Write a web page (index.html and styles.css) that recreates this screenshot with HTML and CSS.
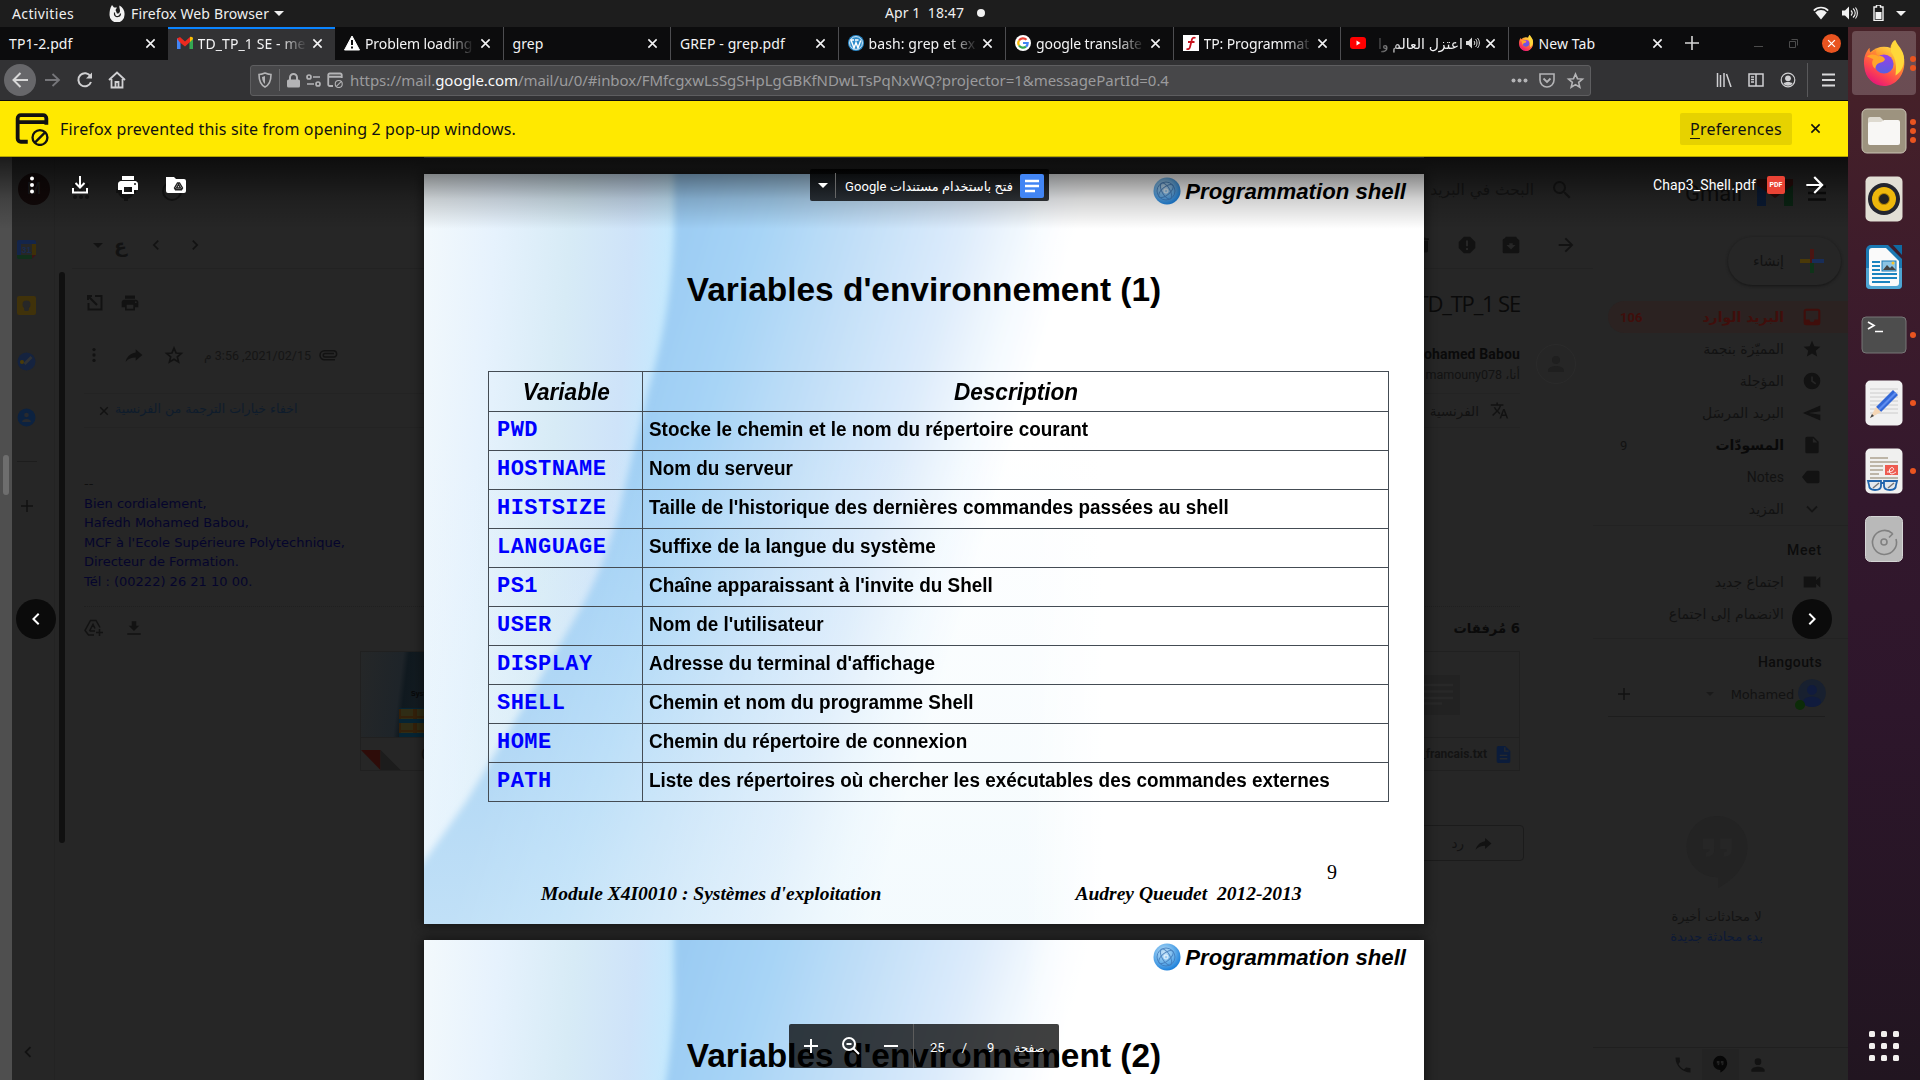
FILE: index.html
```html
<!DOCTYPE html>
<html lang="en">
<head>
<meta charset="utf-8">
<title>TD_TP_1 SE - Gmail</title>
<link rel="stylesheet" href="styles.css">
</head>
<body>
<svg class="defs" width="0" height="0">
  <defs>
    <symbol id="close" viewBox="0 0 12 12"><path d="M1.5 1.5l9 9M10.5 1.5l-9 9" fill="none" stroke="currentColor" stroke-width="1.7"/></symbol>
    <symbol id="more" viewBox="0 0 24 24"><circle cx="12" cy="5.5" r="2"/><circle cx="12" cy="12" r="2"/><circle cx="12" cy="18.500" r="2"/></symbol>
    <symbol id="print" viewBox="0 0 24 24"><path d="M19 8H5c-1.660 0-3 1.340-3 3v6h4v4h12v-4h4v-6c0-1.660-1.340-3-3-3zm-3 11H8v-5h8v5zm3-7a1 1 0 1 1 0-2 1 1 0 0 1 0 2zm-1-9H6v4h12V3z"/></symbol>
    <symbol id="forward" viewBox="0 0 24 24"><path d="M12 4l-1.410 1.410L16.170 11H4v2h12.170l-5.580 5.590L12 20l8-8z"/></symbol>
    <symbol id="search" viewBox="0 0 24 24"><path d="M15.500 14h-.790l-.280-.270A6.470 6.470 0 0 0 16 9.500 6.500 6.500 0 1 0 9.500 16c1.610 0 3.090-.590 4.230-1.570l.270.280v.790l5 4.990L20.490 19l-4.990-5zm-6 0a4.500 4.500 0 1 1 0-9 4.500 4.500 0 0 1 0 9z"/></symbol>
    <symbol id="star" viewBox="0 0 24 24"><path d="M12 17.270L18.180 21l-1.640-7.030L22 9.240l-7.190-.610L12 2 9.190 8.630 2 9.240l5.460 4.730L5.820 21z"/></symbol>
    <symbol id="star-line" viewBox="0 0 24 24"><path d="M12 3.800l2.500 5.900 6.300.5-4.800 4.100 1.500 6.200-5.500-3.300-5.500 3.300 1.500-6.200-4.800-4.100 6.300-.5z" fill="none" stroke="currentColor" stroke-width="2"/></symbol>
    <symbol id="reply" viewBox="0 0 24 24"><path d="M14 9V5l8 7-8 7v-4.100c-5 0-9 1.600-12 5.100 1-5 5-10 12-11z"/></symbol>
    <symbol id="download" viewBox="0 0 24 24"><path d="M19 9h-4V3H9v6H5l7 7 7-7zM3 19v2h18v-2H3z"/></symbol>
    <symbol id="left" viewBox="0 0 24 24"><path d="M15.400 7.400L14 6l-6 6 6 6 1.400-1.400L10.800 12z"/></symbol>
    <symbol id="right" viewBox="0 0 24 24"><path d="M8.600 7.400L10 6l6 6-6 6-1.400-1.400 4.600-4.600z"/></symbol>
    <symbol id="plus" viewBox="0 0 24 24"><path d="M11 4h2v7h7v2h-7v7h-2v-7H4v-2h7z"/></symbol>
    <symbol id="person" viewBox="0 0 24 24"><path d="M12 12a4 4 0 1 0 0-8 4 4 0 0 0 0 8zm0 2c-2.670 0-8 1.340-8 4v2h16v-2c0-2.660-5.330-4-8-4z"/></symbol>
    <symbol id="file" viewBox="0 0 24 24"><path d="M6 2a2 2 0 0 0-2 2v16c0 1.100.9 2 2 2h12a2 2 0 0 0 2-2V8l-6-6H6zm7 7V3.500L18.500 9H13z"/></symbol>
    <symbol id="hangouts" viewBox="0 0 24 24"><path fill-rule="evenodd" d="M11.500 1A8.900 8.900 0 0 0 2.600 10a8.900 8.900 0 0 0 8.900 8.900h.3V22c5-2.500 8.600-7 8.600-12A8.900 8.900 0 0 0 11.500 1zM7.300 7.500h3.400v3.400c0 1.300-.9 2-2.400 2v-1.300c.7 0 1-.4 1-.9h-2zM12.400 7.500h3.400v3.400c0 1.300-.9 2-2.400 2v-1.300c.7 0 1-.4 1-.9h-2z"/></symbol>
    <symbol id="popup-blocked" viewBox="0 0 32 32"><path d="M12 28H5.500A3 3 0 0 1 2.500 25V6a3 3 0 0 1 3-3h21a3 3 0 0 1 3 3v6M3 9.500h26" fill="none" stroke="currentColor" stroke-width="3.600"/><circle cx="23.500" cy="24" r="7" fill="none" stroke="currentColor" stroke-width="2.200"/><path d="M18.700 28.800l9.600-9.600" stroke="currentColor" stroke-width="2.200"/></symbol>
    <symbol id="firefox" viewBox="0 0 48 48">
      <circle cx="24" cy="27" r="20" fill="url(#ff-body)"/>
      <path d="M3.500 28C2 19 5 12 9 8c-.3 3 .6 5 2 6 1.500-2 3-3 5-4-.5 3 0 5 1 6l7 2-5 9c2 6 9 8 14 4 6-5 4-15-2-19-1-4 0-8 4-12 1 5 9 11 10 20 2 16-9 28-21 28C13 48 4 39 3.500 28z" fill="url(#ff-body)"/>
      <circle cx="24" cy="25" r="10" fill="url(#ff-globe)"/>
      <path d="M31 12c0-5 2-9 5-12 1 5 9 10 9 20 0 8-4 14-9 17 1-9 1-17-5-25z" fill="#ffd83a"/>
      <path d="M6 17c5-3 9-2 12 0 4-1 6 1 7 3-1 3-4 3-6 4-3 1-4 4-4 6-4-3-4-8-2-10-2-1-5-2-7-3z" fill="#ffa62b"/>
    </symbol>
    <linearGradient id="ff-body" x1=".8" y1="0" x2=".25" y2="1"><stop offset="0" stop-color="#ffe14a"/><stop offset=".35" stop-color="#ff9a2e"/><stop offset=".7" stop-color="#ff4a4a"/><stop offset="1" stop-color="#e2107e"/></linearGradient>
    <linearGradient id="ff-globe" x1="0" y1="0" x2="0" y2="1"><stop offset="0" stop-color="#9a3ee8"/><stop offset="1" stop-color="#5660e0"/></linearGradient>
    <linearGradient id="sky-left" gradientUnits="userSpaceOnUse" x1="0" y1="0" x2="250" y2="20"><stop offset="0" stop-color="#f3f9fc"/><stop offset=".3" stop-color="#e6f2fd"/><stop offset=".6" stop-color="#d7ebf6"/><stop offset=".85" stop-color="#cee3f9"/><stop offset="1" stop-color="#c6e9fd"/></linearGradient>
    <linearGradient id="sky-right" gradientUnits="userSpaceOnUse" x1="249" y1="0" x2="637" y2="115"><stop offset="0" stop-color="#99caf2"/><stop offset=".25" stop-color="#a7d4f6"/><stop offset=".5" stop-color="#c4e0f8"/><stop offset=".72" stop-color="#dcebfb"/><stop offset=".88" stop-color="#f3f9fe"/><stop offset="1" stop-color="#fff"/></linearGradient>
    <linearGradient id="sky-fade" x1="0" y1="0" x2="0" y2="1"><stop offset=".35" stop-color="#e8f6fc" stop-opacity="0"/><stop offset="1" stop-color="#e8f6fc" stop-opacity=".5"/></linearGradient>
    <filter id="soft" x="-5%" y="-5%" width="110%" height="110%"><feGaussianBlur stdDeviation="3.500"/></filter>
    <symbol id="sky" viewBox="0 0 1000 750">
      <rect width="1000" height="750" fill="url(#sky-left)"/>
      <path d="M250-20V60C247 130 236 175 224 218 214 262 206 290 197 330 188 366 176 400 156 436L100 532 42 628-20 716V790H1020V-20z" fill="url(#sky-right)" filter="url(#soft)"/>
      <rect width="1000" height="750" fill="url(#sky-fade)"/>
      <rect x="600" width="400" height="750" fill="url(#white-in)"/>
    </symbol>
    <linearGradient id="white-in"><stop offset="0" stop-color="#fff" stop-opacity="0"/><stop offset=".2" stop-color="#fff"/></linearGradient>
    <radialGradient id="orb" cx=".4" cy=".35" r=".7"><stop offset="0" stop-color="#c9e4f8"/><stop offset=".5" stop-color="#6db4ec"/><stop offset="1" stop-color="#1279d8"/></radialGradient>
    <symbol id="emblem" viewBox="0 0 28 28"><circle cx="14" cy="14" r="13.500" fill="url(#orb)"/><g fill="none" stroke="#3e78b8" stroke-width="1" opacity=".8"><circle cx="13" cy="14" r="9"/><ellipse cx="13" cy="14" rx="9" ry="4" transform="rotate(60 13 14)"/><ellipse cx="13" cy="14" rx="9" ry="4" transform="rotate(-40 13 14)"/><circle cx="13" cy="14" r="2" stroke="#fff"/></g></symbol>
  </defs>
</svg>

<div class="desktop">
  <header class="topbar">
    <span class="activities">Activities</span>
    <svg class="tb-fox" width="16" height="18" viewBox="0 0 16 18"><path d="M3 1l2 2.500h3L6.500 6 8 9.500a2.500 2.500 0 0 0 3-2.500c0-2-1-3-.5-5.500C14 3.500 16 7 15.500 11a7.500 7.500 0 0 1-15 0C.5 7 1 4 3 1z" fill="#f2f2f2"/><path d="M5.500 8.500c-.5 3 1.500 4.500 3.500 4 1.500-.3 2.500-1.500 2.500-3" stroke="#1d1d1d" stroke-width="1.200" fill="none"/></svg>
    <span class="appname">Firefox Web Browser</span><i class="caret"></i>
    <span class="clock">Apr 1&nbsp; 18:47<i></i></span>
    <div class="tray">
      <svg width="16" height="14" viewBox="0 0 16 14"><path d="M.8 4.600a10 10 0 0 1 14.400 0" fill="none" stroke="#f2f2f2" stroke-width="1.600"/><path d="M8 13.500L2.200 6.400a8 8 0 0 1 11.600 0z" fill="#f2f2f2"/></svg>
      <svg width="16" height="14" viewBox="0 0 16 14"><path d="M0 4.500h3l4-4v13l-4-4H0z" fill="#f2f2f2"/><path d="M9 4.500c1.500 1.500 1.500 3.500 0 5M11 2.500c3 2.500 3 6.500 0 9M13.500 1.500c2.500 3 2.500 8 0 11" fill="none" stroke="#f2f2f2" stroke-width="1.100"/></svg>
      <svg width="11" height="16" viewBox="0 0 11 16"><path d="M3.500 0h4v2H10v13.500H1V2h2.500z" fill="none" stroke="#f2f2f2" stroke-width="1.400"/><rect x="2.500" y="7" width="6" height="7" fill="#f2f2f2"/></svg>
      <i class="caret"></i>
    </div>
  </header>

  <div class="workspace">
    <div class="browser">
      <nav class="tabs">
        <div class="tab"><span>TP1-2.pdf</span><svg class="x"><use href="#close"/></svg></div>
        <div class="tab active"><svg class="fav" viewBox="0 0 16 16"><path d="M0 3v11h3.500V6z" fill="#4285f4"/><path d="M12.500 6v8H16V3z" fill="#34a853"/><path d="M0 3.500L3 2l5 4.500L13 2v5L8 11.500 3 7.500z" fill="#ea2a1f"/><path d="M13 2c2-.5 3 .5 3 2l-3 3z" fill="#fbbc04"/></svg><span class="fade">TD_TP_1 SE - me</span><svg class="x"><use href="#close"/></svg></div>
        <div class="tab"><svg class="fav" viewBox="0 0 16 16"><path d="M8 1l7.500 14H.5z" fill="#fff" stroke="#fff" stroke-linejoin="round"/><path d="M8 5v5M8 11.500v2" stroke="#0c0c0d" stroke-width="2"/></svg><span class="fade tight">Problem loading</span><svg class="x"><use href="#close"/></svg></div>
        <div class="tab line"><span>grep</span><svg class="x"><use href="#close"/></svg></div>
        <div class="tab line"><span>GREP - grep.pdf</span><svg class="x"><use href="#close"/></svg></div>
        <div class="tab line"><svg class="fav" viewBox="0 0 16 16"><circle cx="8" cy="8" r="8" fill="#2e8ccb"/><circle cx="8" cy="8" r="6.400" fill="none" stroke="#fff" stroke-width=".8"/><path d="M3 5l3 8 2-5.500L10 13l2.700-7.500M2.500 5H6M7 5h3.500" fill="none" stroke="#fff" stroke-width="1.400"/></svg><span class="fade">bash: grep et ex</span><svg class="x"><use href="#close"/></svg></div>
        <div class="tab line"><svg class="fav" viewBox="0 0 16 16"><circle cx="8" cy="8" r="8" fill="#fff"/><g fill="none" stroke-width="2.200"><path d="M11.500 4.800A4.800 4.800 0 0 0 4 5.500" stroke="#ea4335"/><path d="M4 5.500a4.800 4.800 0 0 0 0 5" stroke="#fbbc05"/><path d="M4 10.500a4.800 4.800 0 0 0 7 1.200" stroke="#34a853"/><path d="M8 8h4.700a4.800 4.800 0 0 1-1.700 3.700" stroke="#4285f4"/></g></svg><span class="fade tight">google translate</span><svg class="x"><use href="#close"/></svg></div>
        <div class="tab line"><svg class="fav" viewBox="0 0 16 16"><rect width="16" height="16" fill="#fff"/><path d="M12.500 3c-2.500-1-3.500.5-4 3L7 12c-.5 2-1.500 2.500-3.500 1.800M5 7h6.500" fill="none" stroke="#c8141e" stroke-width="1.800"/></svg><span class="fade tight">TP: Programmat</span><svg class="x"><use href="#close"/></svg></div>
        <div class="tab line"><svg class="fav" viewBox="0 0 16 16"><rect y="2" width="16" height="12" rx="3" fill="#f00"/><path d="M6.500 5.500v5l4-2.500z" fill="#fff"/></svg><span class="fade rtl" dir="rtl">اعتزل العالم وا</span><svg class="snd" viewBox="0 0 14 12"><path d="M0 4h2.500L6 .5v11L2.500 8H0z" fill="#ddd"/><path d="M8 4c1 1 1 3 0 4M9.500 2c2 2 2 6 0 8M11.500 1c2.500 3 2.500 7 0 10" fill="none" stroke="#ddd"/></svg><svg class="x"><use href="#close"/></svg></div>
        <div class="tab line"><svg class="fav"><use href="#firefox"/></svg><span>New Tab</span><svg class="x"><use href="#close"/></svg></div>
        <div class="newtab"><svg width="16" height="16" viewBox="0 0 16 16"><path d="M8 1v14M1 8h14" stroke="#d6d6d6" stroke-width="1.600"/></svg></div>
        <div class="winctl"><i class="min"></i><svg width="9" height="9" viewBox="0 0 9 9"><path d="M.5 2.500h6v6h-6zM2.500.5h6v6" fill="none" stroke="#4c4c4c"/></svg><b><svg width="9" height="9"><use href="#close"/></svg></b></div>
      </nav>

      <div class="navbar">
        <div class="navbtns">
          <span class="back"><svg width="18" height="18" viewBox="0 0 18 18"><path d="M9.500 2L2.500 9l7 7M2.500 9H17" fill="none" stroke="#d8d8d8" stroke-width="2"/></svg></span>
          <svg width="18" height="18" viewBox="0 0 18 18"><path d="M8.500 3l6.500 6-6.500 6M15 9H1" fill="none" stroke="#76767a" stroke-width="1.800"/></svg>
          <svg width="18" height="18" viewBox="0 0 18 18"><path d="M14.500 5.500A6.500 6.500 0 1 0 15 11" fill="none" stroke="#d0d0d2" stroke-width="2"/><path d="M16 1.500v6h-6z" fill="#d0d0d2"/></svg>
          <svg width="18" height="18" viewBox="0 0 18 18"><path d="M1 9l8-7.500L17 9M3.500 8v8.500h11V8M7.500 16v-5h3v5" fill="none" stroke="#d0d0d2" stroke-width="1.800"/></svg>
        </div>
        <div class="urlbar">
          <svg width="14" height="16" viewBox="0 0 14 16"><path d="M1 2.500C3 2.500 5 1.800 7 1c2 .8 4 1.500 6 1.500 0 6-1 10-6 12.500C2 12.500 1 8.500 1 2.500z" fill="none" stroke="#b4b4b6" stroke-width="1.600"/><path d="M7 4v8c-2-1.500-2.800-4-3-7z" fill="#b4b4b6"/></svg>
          <i class="usep"></i>
          <svg width="13" height="15" viewBox="0 0 13 15"><rect y="6.500" width="13" height="8" rx="1.500" fill="#b4b4b6"/><path d="M3 7V4.500a3.500 3.500 0 0 1 7 0V7" fill="none" stroke="#b4b4b6" stroke-width="2"/></svg>
          <svg width="15" height="13" viewBox="0 0 15 13"><g fill="none" stroke="#b4b4b6" stroke-width="1.700"><circle cx="3" cy="3" r="2"/><path d="M7 3h7M1 10h7"/><circle cx="12" cy="10" r="2"/></g></svg>
          <svg class="pb" width="16" height="16"><use href="#popup-blocked"/></svg>
          <span class="url">https://mail.<b>google.com</b>/mail/u/0/#inbox/FMfcgxwLsSgSHpLgGBKfNDwLTsPqNxWQ?projector=1&amp;messagePartId=0.4</span>
          <svg width="17" height="5" viewBox="0 0 17 5"><g fill="#b4b4b6"><circle cx="2.500" cy="2.500" r="2"/><circle cx="8.500" cy="2.500" r="2"/><circle cx="14.500" cy="2.500" r="2"/></g></svg>
          <svg width="16" height="15" viewBox="0 0 16 15"><path d="M1 1h14v6a7 7 0 0 1-14 0z" fill="none" stroke="#b4b4b6" stroke-width="1.600"/><path d="M4.500 5.500L8 9l3.500-3.500" fill="none" stroke="#b4b4b6" stroke-width="1.800"/></svg>
          <svg class="bm" width="19" height="19"><use href="#star-line"/></svg>
        </div>
        <div class="navend">
          <svg width="16" height="14" viewBox="0 0 16 14"><path d="M1.500 0v14M4.500 2v12M8 0v14M10.500 1l4.500 13" stroke="#d0d0d2" stroke-width="1.500" fill="none"/></svg>
          <svg width="16" height="14" viewBox="0 0 16 14"><path d="M1 1h14v12H1zM8 1v12M3 4h3M3 6.500h3M3 9h3" fill="none" stroke="#d0d0d2" stroke-width="1.500"/></svg>
          <svg width="16" height="16" viewBox="0 0 16 16"><circle cx="8" cy="8" r="6.800" fill="none" stroke="#d0d0d2" stroke-width="1.200"/><circle cx="8" cy="6.300" r="2.900" fill="#d0d0d2"/><path d="M3.500 11.500c1.500-2 7.500-2 9 0-2 3-7 3-9 0z" fill="#d0d0d2"/></svg>
          <i class="nsep"></i>
          <svg width="13" height="14" viewBox="0 0 13 14"><path d="M0 1.500h13M0 7h13M0 12.500h13" stroke="#d8d8da" stroke-width="2"/></svg>
        </div>
      </div>

      <div class="notice">
        <svg class="pb" width="34" height="34"><use href="#popup-blocked"/></svg>
        <span class="msg">Firefox prevented this site from opening 2 pop-up windows.</span>
        <button><u>P</u>references</button>
        <svg class="x"><use href="#close"/></svg>
      </div>

      <main class="page">
        <div class="gmail">
          <div class="scrolltrack"><i></i></div>
          <aside class="rail">
            <span class="disc">M</span>
            <svg width="19" height="19" viewBox="0 0 19 19"><path d="M0 2a2 2 0 0 1 2-2h15a2 2 0 0 1 2 2v13l-4 4H2a2 2 0 0 1-2-2z" fill="#14254a"/><path d="M15 4h4v11h-4z" fill="#3e3008"/><path d="M0 15h15v4H2a2 2 0 0 1-2-2z" fill="#11301b"/><path d="M15 15h4l-4 4z" fill="#3e1512"/><rect x="4" y="4" width="11" height="11" fill="#272727"/><text x="4.800" y="12.700" font-size="8.500" font-weight="700" fill="#182c50">31</text></svg>
            <svg width="19" height="19" viewBox="0 0 19 19"><rect width="19" height="19" rx="2" fill="#40320a"/><circle cx="9.500" cy="8.500" r="4" fill="#272727"/><path d="M7.500 11.500h4v2h-4zM7.500 14.500h4" stroke="#272727" fill="#272727"/></svg>
            <svg width="19" height="19" viewBox="0 0 19 19"><circle cx="9.500" cy="9.500" r="9" fill="#15233f"/><path d="M7.500 12l7-7" stroke="#303235" stroke-width="3"/><circle cx="5" cy="10" r="2" fill="#4a3b08"/></svg>
            <svg width="19" height="19" viewBox="0 0 19 19"><circle cx="9.500" cy="9.500" r="9" fill="#0c2240"/><circle cx="9.500" cy="7" r="2.300" fill="#282a2e"/><path d="M5 14c0-4 9-4 9 0z" fill="#282a2e"/></svg>
            <hr>
            <svg class="add" width="18" height="18"><use href="#plus"/></svg>
            <svg class="fold" width="22" height="22"><use href="#left"/></svg>
          </aside>
          <section class="mail">
            <i class="mailbar"></i>
            <div class="mrow m-search">
              <div class="lft">
                <svg width="18" height="18" viewBox="0 0 18 18"><g><circle cx="3" cy="3" r="2"/><circle cx="9" cy="3" r="2"/><circle cx="15" cy="3" r="2"/><circle cx="3" cy="9" r="2"/><circle cx="9" cy="9" r="2"/><circle cx="15" cy="9" r="2"/><circle cx="3" cy="15" r="2"/><circle cx="9" cy="15" r="2"/><circle cx="15" cy="15" r="2"/></g></svg>
                <svg width="20" height="20" viewBox="0 0 20 20"><circle cx="10" cy="10" r="6" fill="none" stroke="currentColor" stroke-width="4"/><path d="M10 0v4M10 16v4M0 10h4M16 10h4" stroke="currentColor" stroke-width="4"/></svg>
                <svg width="20" height="20" viewBox="0 0 20 20"><circle cx="10" cy="10" r="9" fill="none" stroke="currentColor" stroke-width="2"/></svg>
              </div>
              <div class="rgt"><span dir="rtl">البحث في البريد</span><svg width="24" height="24"><use href="#search"/></svg></div></div>
            <div class="mrow m-tools"><div class="lft"><i class="caret"></i><b>ع</b><svg width="20" height="20"><use href="#left"/></svg><svg width="20" height="20"><use href="#right"/></svg></div>
              <div class="rgt"><svg width="20" height="20" viewBox="0 0 24 24"><path d="M6 19c0 1.100.9 2 2 2h8a2 2 0 0 0 2-2V7H6zM19 4h-3.500l-1-1h-5l-1 1H5v2h14z"/></svg><svg width="20" height="20" viewBox="0 0 24 24"><path d="M15.700 2H8.300L2 8.300v7.400L8.300 22h7.400l6.300-6.300V8.300z"/><path d="M12 6.500v7M12 15.500v2.500" stroke="#262626" stroke-width="2.500"/></svg><svg width="20" height="20" viewBox="0 0 24 24"><path d="M20.500 5.200l-1.400-1.700C18.900 3.200 18.500 2 18 2H6c-.5 0-.9 1.200-1.200 1.500L2.500 5.200C2.200 5.600 2 6 2 6.500V20c0 1.100.9 2 2 2h16a2 2 0 0 0 2-2V6.500c0-.5-1.200-1-1.500-1.300zM12 17.500L6.500 12H10v-2h4v2h3.500z"/></svg><svg width="22" height="22"><use href="#forward"/></svg></div></div>
            <div class="mrow m-subject"><div class="lft"><svg width="16" height="16" viewBox="0 0 16 16"><path d="M5 1H1v4M1 1l9 9M8 1h6.500v13.500h-13V8" fill="none" stroke="#121212" stroke-width="2"/></svg><svg width="20" height="20"><use href="#print"/></svg></div><div class="rgt"><h1>TD_TP_1 SE</h1></div></div>
            <div class="mrow m-sender"><div class="lft"><svg width="20" height="20"><use href="#more"/></svg><svg width="20" height="20"><use href="#reply"/></svg><svg width="20" height="20"><use href="#star-line"/></svg><time dir="rtl">2021/02/15, 3:56 م</time><svg width="19" height="11" viewBox="0 0 19 11"><path d="M16 9.800H5.500a4.500 4.500 0 0 1 0-9H15a3.200 3.200 0 0 1 0 6.300H6a1.700 1.700 0 0 1 0-3.500h9" fill="none" stroke="#121212" stroke-width="1.500"/></svg></div>
              <div class="rgt"><p><b>Mohamed Babou</b><small dir="rtl">أنا، mamouny078</small></p><span class="avatar"><svg width="24" height="24"><use href="#person"/></svg></span></div></div>
            <div class="mrow m-trans"><div class="lft"><svg class="x"><use href="#close"/></svg><a dir="rtl">اخفاء خيارات الترجمة من الفرنسية</a></div><div class="rgt"><span dir="rtl">الفرنسية</span><svg width="19" height="19" viewBox="0 0 24 24"><path d="M12.900 15.100l-2.600-2.500A17.500 17.500 0 0 0 14.100 6H17V4h-7V2H8v2H1v2h11.200A15 15 0 0 1 9 11.400 15 15 0 0 1 6.700 8h-2a18 18 0 0 0 3 4.600l-5.100 5L4 19l5-5 3.100 3.100zM18.500 10h-2L12 22h2l1.100-3h4.800l1.100 3h2zm-2.600 7l1.600-4.300 1.600 4.300z"/></svg></div></div>
            <div class="m-body"><p class="dash">--</p><p>Bien cordialement,</p><p>Hafedh Mohamed Babou,</p><p>MCF à l'Ecole Supérieure Polytechnique,</p><p>Directeur de Formation.</p><p>Tél : (00222) 26 21 10 00.</p></div>
            <div class="mrow m-atthead"><div class="lft"><svg width="20" height="18" viewBox="0 0 20 18"><path d="M10 16H4.500L1 11.500 6.500 1.500h5.500l4 7M5.500 12h5.500M5.500 12l3.500-6.500 2 4M15.500 10v7M12 13.500h7" fill="none" stroke="#121212" stroke-width="1.500"/></svg><svg width="18" height="18"><use href="#download"/></svg></div><div class="rgt"><b dir="rtl">6 مُرفقات</b></div></div>
            <div class="m-cards">
              <div class="card pdf"><div class="thumb"><b>Système</b><i></i></div><p><span>Chap3</span></p><svg width="40" height="20" viewBox="0 0 40 20"><path d="M0 0h19.500v20z" fill="#2e0c09"/><path d="M19.500 0l20 20h-20z" fill="#1c1c1c"/></svg></div>
              <div class="card txt"><div class="thumb"><svg width="48" height="40" viewBox="0 0 48 40"><rect width="48" height="40" fill="#222"/><path d="M0 10h41M0 16.500h41M0 23h41M0 28.500h30" stroke="#282828" stroke-width="2.600"/></svg></div><p><span>_francais.txt</span><svg width="15" height="17" viewBox="3.500 2 17 20"><path d="M6 2a2 2 0 0 0-2 2v16c0 1.100.9 2 2 2h12a2 2 0 0 0 2-2V8l-6-6z"/><path d="M7.500 13h9M7.500 17h9M13.500 3.500V8H18" stroke="#26292e" stroke-width="1.600" fill="none"/></svg></p></div>
            </div>
            <div class="m-reply"><span dir="rtl">رد</span><svg width="19" height="19"><use href="#reply"/></svg></div>
          </section>
          <aside class="side">
            <div class="brand"><span>Gmail</span><svg width="36" height="28" viewBox="0 0 36 28"><path d="M0 3l9 7v17H0z" fill="#0a1a33"/><path d="M27 10l9-7v24h-9z" fill="#0a2413"/><path d="M0 0h9l9 8 9-8h9v6L18 19 0 6z" fill="#280b0a"/></svg><svg width="20" height="16" viewBox="0 0 20 16"><path d="M0 1.500h18M0 8h18M0 14.500h18" stroke="#0c0c0c" stroke-width="2.500"/></svg></div>
            <div class="compose"><span dir="rtl">إنشاء</span><svg width="24" height="24" viewBox="0 0 24 24"><path d="M10 0h4v14h-4z" fill="#4a1512"/><path d="M10 14h4v10h-4z" fill="#0f3319"/><path d="M0 10h10v4H0z" fill="#4a3908"/><path d="M12 10h12v4H12z" fill="#182d58"/></svg></div>
            <div class="item inbox"><em>106</em><span dir="rtl">البريد الوارد</span><svg viewBox="0 0 24 24"><path d="M19 2H5a3 3 0 0 0-3 3v14a3 3 0 0 0 3 3h14a3 3 0 0 0 3-3V5a3 3 0 0 0-3-3zm.500 13H15a3 3 0 0 1-6 0H4.500V4.500h15z"/></svg></div>
            <div class="item"><span dir="rtl">المميّزة بنجمة</span><svg><use href="#star"/></svg></div>
            <div class="item"><span dir="rtl">المؤجلة</span><svg viewBox="0 0 24 24"><circle cx="12" cy="12" r="10"/><path d="M12 6.500V12l4.500 3.500" fill="none" stroke="#262626" stroke-width="2"/></svg></div>
            <div class="item"><span dir="rtl">البريد المرسَل</span><svg viewBox="0 0 24 24"><path d="M22 21L1 12 22 3v7L8 12l14 2z"/></svg></div>
            <div class="item bold"><em>9</em><span dir="rtl">المسودّات</span><svg><use href="#file"/></svg></div>
            <div class="item"><span>Notes</span><svg viewBox="0 0 24 24"><path d="M5 5.800C5.500 5 6.300 4.500 7 4.500h12a2 2 0 0 1 2 2v11a2 2 0 0 1-2 2H7c-.7 0-1.500-.500-2-1.300L0 12z"/></svg></div>
            <div class="item"><span dir="rtl">المزيد</span><svg viewBox="0 0 24 24"><path d="M6 9l6 6 6-6" fill="none" stroke="#151515" stroke-width="2.200"/></svg></div>
            <h2 class="meet">Meet</h2>
            <div class="item"><span dir="rtl">اجتماع جديد</span><svg viewBox="0 0 24 24"><path d="M17 10V5.500H2v13h15V14l5 4.500v-13z"/></svg></div>
            <div class="item"><span dir="rtl">الانضمام إلى اجتماع</span><svg viewBox="0 0 24 24"></svg></div>
            <h2 class="hang">Hangouts</h2>
            <div class="user"><svg width="18" height="18"><use href="#plus"/></svg><i class="caret"></i><span>Mohamed</span><svg class="me" width="32" height="32" viewBox="0 0 32 32"><defs><clipPath id="me-clip"><circle cx="18" cy="14" r="14"/></clipPath></defs><g clip-path="url(#me-clip)"><circle cx="18" cy="14" r="14" fill="#18202f"/><circle cx="18" cy="11" r="5" fill="#101b3d"/><ellipse cx="18" cy="23" rx="9" ry="5.500" fill="#101b3d"/></g><circle cx="6" cy="26" r="5" fill="#0c2c08"/></svg></div>
            <div class="empty"><svg width="62" height="72" viewBox="2.600 1 17.800 21"><use href="#hangouts" width="24" height="24"/></svg><p dir="rtl">لا محادثات أخيرة</p><a dir="rtl">بدء محادثة جديدة</a></div>
            <div class="chatbar"><svg width="20" height="20" viewBox="0 0 24 24"><path d="M6.600 10.800c1.500 2.800 3.800 5.100 6.600 6.600l2.200-2.200c.3-.3.700-.4 1-.2 1.100.3 2.300.5 4.600.500v5.500c-9.400 0-18-7.600-18-18h5c0 2 .2 3.400.5 4.500.1.400 0 .8-.2 1z"/></svg><b><svg width="19" height="19"><use href="#hangouts"/></svg></b><svg width="20" height="20"><use href="#person"/></svg></div>
          </aside>
        </div>

        <div class="viewer">
          <div class="slides">
            <i class="prev-edge"></i>
            <article class="slide">
              <svg class="bg" width="1000" height="750"><use href="#sky"/></svg>
              <div class="shead"><svg width="28" height="28"><use href="#emblem"/></svg><span>Programmation shell</span></div>
              <h3>Variables d'environnement (1)</h3>
              <div class="table">
                <div class="th"><b><span>Variable</span></b><b><span>Description</span></b></div>
                <div><code>PWD</code><p><span>Stocke le chemin et le nom du répertoire courant</span></p></div>
                <div><code>HOSTNAME</code><p><span>Nom du serveur</span></p></div>
                <div><code>HISTSIZE</code><p><span>Taille de l'historique des dernières commandes passées au shell</span></p></div>
                <div><code>LANGUAGE</code><p><span>Suffixe de la langue du système</span></p></div>
                <div><code>PS1</code><p><span>Chaîne apparaissant à l'invite du Shell</span></p></div>
                <div><code>USER</code><p><span>Nom de l'utilisateur</span></p></div>
                <div><code>DISPLAY</code><p><span>Adresse du terminal d'affichage</span></p></div>
                <div><code>SHELL</code><p><span>Chemin et nom du programme Shell</span></p></div>
                <div><code>HOME</code><p><span>Chemin du répertoire de connexion</span></p></div>
                <div><code>PATH</code><p><span>Liste des répertoires où chercher les exécutables des commandes externes</span></p></div>
              </div>
              <div class="num">9</div>
              <footer><span>Module X4I0010 : Systèmes d'exploitation</span><span>Audrey Queudet&nbsp; 2012-2013</span></footer>
            </article>
            <article class="slide">
              <svg class="bg" width="1000" height="750"><use href="#sky"/></svg>
              <div class="shead"><svg width="28" height="28"><use href="#emblem"/></svg><span>Programmation shell</span></div>
              <h3>Variables d'environnement (2)</h3>
            </article>
          </div>
          <div class="vhead">
            <div class="vleft">
              <svg width="24" height="24"><use href="#more"/></svg>
              <svg width="24" height="24" viewBox="0 0 24 24"><path d="M12 3v11M7.500 10l4.500 4.500 4.500-4.500M5 15v4.500h14V15" fill="none" stroke="#fff" stroke-width="2"/></svg>
              <svg width="24" height="24"><use href="#print"/></svg>
              <svg width="24" height="24" viewBox="0 0 24 24"><path d="M2 4h8l2 2h8a2 2 0 0 1 2 2v10a2 2 0 0 1-2 2H4a2 2 0 0 1-2-2z"/><path d="M13.500 10h2l3 5-1 1.700h-6l-1-1.700zM14.500 11.500l-2 3.500h4z" fill="none" stroke="#222" stroke-width="1.400"/></svg>
            </div>
            <div class="vright"><span>Chap3_Shell.pdf</span><i>PDF</i><svg width="26" height="26"><use href="#forward"/></svg></div>
          </div>
          <div class="openwith"><i class="caret"></i><span dir="rtl">فتح باستخدام مستندات Google</span><svg width="24" height="24" viewBox="0 0 24 24"><rect width="24" height="24" rx="2" fill="#4285f4"/><path d="M5 7h14M5 12h14M5 17h10" stroke="#fff" stroke-width="2.500"/></svg></div>
          <div class="round prev"><svg width="24" height="24"><use href="#left"/></svg></div>
          <div class="round next"><svg width="24" height="24"><use href="#right"/></svg></div>
          <div class="zoombar">
            <svg width="20" height="20" viewBox="0 0 20 20"><path d="M10 3v14M3 10h14" stroke="#fff" stroke-width="2"/></svg>
            <svg width="20" height="20" viewBox="0 0 20 20"><circle cx="8" cy="8" r="6" fill="none" stroke="#fff" stroke-width="2"/><path d="M5.500 8h5M12.500 12.500l5.500 5.500" stroke="#fff" stroke-width="2"/></svg>
            <svg width="20" height="20" viewBox="0 0 20 20"><path d="M3 10h14" stroke="#fff" stroke-width="2"/></svg>
            <i></i><span class="n1">25</span><span class="n2">/</span><span class="n3">9</span><span class="n4" dir="rtl">صفحة</span>
          </div>
        </div>
      </main>
    </div>

    <aside class="dock">
      <div class="app current"><svg width="46" height="50"><use href="#firefox"/></svg><em><i></i><i></i></em></div>
      <div class="app"><svg width="46" height="46" viewBox="0 0 46 46"><rect x="1" y="1" width="44" height="44" rx="5" fill="#9d937f" stroke="#c8c3b4"/><path d="M7 11a2 2 0 0 1 2-2h10l3 3v6H7z" fill="#dedad0"/><path d="M7 16q0-2 2-2h11l3-2h14q2 0 2 2v21q0 2-2 2H9q-2 0-2-2z" fill="#f8f7f5"/></svg><em><i></i><i></i><i></i></em></div>
      <div class="app"><svg width="38" height="46" viewBox="0 0 38 46"><rect x=".5" y=".5" width="37" height="45" rx="5" fill="#e2dfd5"/><circle cx="19" cy="23" r="16" fill="#23252f"/><circle cx="19" cy="23" r="12" fill="#eeb80c"/><circle cx="19" cy="23" r="5.500" fill="#222" stroke="#b98a00"/></svg></div>
      <div class="app"><svg width="38" height="46" viewBox="0 0 38 46"><path d="M1 6a5 5 0 0 1 5-5h17l14 14v26a4 4 0 0 1-4 4H5a4 4 0 0 1-4-4z" fill="#1b79b3"/><path d="M1 24h36v17a4 4 0 0 1-4 4H5a4 4 0 0 1-4-4z" fill="#4ea5d3"/><path d="M28 1h9v10z" fill="#0f6ba3"/><path d="M4 7a3 3 0 0 1 3-3h14l13 13v22a3 3 0 0 1-3 3H7a3 3 0 0 1-3-3z" fill="#fafafa"/><path d="M7 18h8M7 22h8M7 26h8M7 30h25M7 34h25M7 38h18" stroke="#1b84c0" stroke-width="2"/><rect x="17" y="17" width="14" height="10" fill="#8cc4e4" stroke="#1b79b3"/><path d="M18 26l4-5 3 3 2-2 4 4z" fill="#444"/><circle cx="28" cy="19" r="1.500" fill="#f8c52a"/></svg></div>
      <div class="app"><svg width="46" height="38" viewBox="0 0 46 38"><rect x="1" y="1" width="44" height="36" rx="4" fill="#4d4d4d" stroke="#777"/><path d="M7 6l6 3.500L7 13M14 15.500h8" fill="none" stroke="#fff" stroke-width="1.700"/></svg><em><i></i></em></div>
      <div class="app"><svg width="38" height="46" viewBox="0 0 38 46"><rect x=".5" y=".5" width="37" height="45" rx="5" fill="#f1f1f1"/><path d="M5 9h28M5 13h28M5 17h28M5 21h28M5 25h28M5 29h28M5 33h28" stroke="#ccc"/><path d="M11 27l17-17 5 5-17 17z" fill="#3267d6"/><path d="M13 29l17-17 1.500 1.500-17 17z" fill="#5d8cf0"/><path d="M5 38l6-11 5 5z" fill="#f5d6b5"/><path d="M5 38l2-4 2 2z" fill="#444"/></svg><em><i></i></em></div>
      <div class="app"><svg width="38" height="46" viewBox="0 0 38 46"><rect x=".5" y=".5" width="37" height="45" rx="5" fill="#f0f0ef"/><path d="M5 10h18M5 14h28M5 18h13M5 22h13M5 26h9M5 30h28" stroke="#bdb5a7" stroke-width="2"/><rect x="20" y="17" width="13" height="10" fill="#ee5b50"/><path d="M22 24c5 0 8-2 6-4s-5 3-3 5 4 0 6-1" fill="none" stroke="#fff"/><path d="M3 33h13v5q0 4-6 4t-6-5zM19 33h13l-1 4q0 5-6 5t-6-4zM16 35h3" fill="#e3e9ee" stroke="#2065ad" stroke-width="1.800"/><path d="M8 40l6-5M23 40l6-5" stroke="#777" stroke-width="1.500"/></svg><em><i></i></em></div>
      <div class="app"><svg width="38" height="46" viewBox="0 0 38 46"><rect x=".5" y=".5" width="37" height="45" rx="5" fill="#b9b9b9" stroke="#d5d5d5"/><g fill="none" stroke="#808080" stroke-width="1.600"><path d="M27.500 17.500A12 12 0 1 0 31 23"/><path d="M24 21.500l4-4"/><circle cx="19" cy="26" r="3"/></g></svg></div>
      <div class="grid"><i></i><i></i><i></i><i></i><i></i><i></i><i></i><i></i><i></i></div>
    </aside>
  </div>
</div>
</body>
</html>
```
FILE: styles.css
```css
* { box-sizing: border-box; margin: 0; padding: 0; }
body { width: 1920px; height: 1080px; overflow: hidden; font-family: "Noto Sans", "DejaVu Sans", sans-serif; font-size: 14px; background: #1d1d1d; }
svg { display: block; flex: none; fill: currentColor; }
.defs { position: absolute; }
em, i { font-style: normal; }
span, b, p, a, time, h1, h2, h3 { white-space: nowrap; }
.desktop { display: flex; flex-direction: column; height: 1080px; }
.caret { display: block; flex: none; width: 0; height: 0; border: 5px solid transparent; border-top-color: currentColor; border-bottom: 0; }

/* top bar */
.topbar { position: relative; display: flex; align-items: center; height: 27px; padding: 0 20px 1px 12px; color: #f0f0f0; background: #1d1d1d; }
.activities { width: 97px; letter-spacing: .37px; }
.tb-fox { margin-right: 6px; }
.appname { letter-spacing: .14px; margin-right: 5px; }
.clock { position: absolute; left: 885px; top: 3px; display: flex; align-items: center; gap: 13px; white-space: pre; letter-spacing: .08px; }
.clock i { width: 8px; height: 8px; border-radius: 50%; background: #f2f2f2; }
.tray { display: flex; align-items: center; gap: 13px; margin-left: auto; }
.tray svg:nth-child(3) { margin: 0 -1px 0 2px; }
.tray .caret { margin-right: -6px; }

.workspace { display: flex; height: 1053px; }
.browser { display: flex; flex-direction: column; width: 1848px; }

/* tabs */
.tabs { display: flex; height: 33px; background: #0c0c0d; color: #f4f4f5; }
.tab { display: flex; align-items: center; width: 167.5px; padding: 0 12px 1px 9px; letter-spacing: .1px; }
.tab.line { border-left: 1px solid #4d4d50; }
.tab.active { background: #323234; box-shadow: inset 0 2px #0a84ff; }
.tab .fav { width: 16px; height: 16px; margin-right: 5px; }
.tab .fade { width: 109px; overflow: hidden; -webkit-mask-image: linear-gradient(90deg, #000 75%, transparent); mask-image: linear-gradient(90deg, #000 75%, transparent); }
.tab .tight { letter-spacing: -.1px; }
.tab .fade.rtl { width: 92px; -webkit-mask-image: linear-gradient(270deg, #000 65%, transparent); mask-image: linear-gradient(270deg, #000 65%, transparent); }
.tab .snd { width: 14px; height: 12px; margin-left: 3px; }
.x { width: 11px; height: 11px; margin-left: auto; }
.newtab { display: flex; align-items: center; padding: 0 0 1px 9px; width: 79px; }
.winctl { display: flex; align-items: center; padding-bottom: 1px; margin-left: -3px; }
.winctl .min { width: 9px; height: 1px; margin: 6px 26px 0 3px; background: #4c4c4c; }
.winctl b { display: flex; align-items: center; justify-content: center; width: 19px; height: 19px; margin-left: 24px; border-radius: 50%; background: #e95420; color: #fff; }

/* navigation */
.navbar { display: flex; align-items: center; height: 41px; background: #323234; border-bottom: 1px solid #0c0c0d; }
.navbtns { display: flex; align-items: center; gap: 14px; width: 250px; padding-left: 4px; }
.back { display: flex; align-items: center; justify-content: center; width: 32px; height: 32px; margin-right: -6px; border-radius: 50%; background: #67676a; }
.urlbar { display: flex; align-items: center; width: 1341px; height: 31px; padding: 0 5px 0 7px; color: #b4b4b6; background: #474749; border: 1px solid #5e5e60; border-radius: 3px; }
.usep { width: 1px; height: 22px; margin: 0 7px; background: #6a6a6c; }
.urlbar svg + svg { margin-left: 6px; }
.url { flex: 1; margin-left: 7px; font-size: 15px; letter-spacing: -.055px; color: #9b9b9d; }
.url b { font-weight: 400; color: #f9f9fa; }
.urlbar .url + svg + svg, .urlbar .bm { margin-left: 11px; }
.navend { display: flex; align-items: center; flex: 1; padding-left: 125px; gap: 16px; }
.nsep { width: 1px; height: 34px; margin: 0 -2px 0 -5px; background: #59595b; }

/* pop-up notice */
.notice { display: flex; align-items: center; height: 56px; padding: 0 27px 0 15px; color: #111; background: #ffe900; border-bottom: 1px solid #b5a600; font-size: 16px; }
.notice .msg { flex: 1; margin-left: 11px; letter-spacing: .15px; }
.notice button { width: 112px; height: 32px; border: 0; border-radius: 2px; background: #e6d200; color: #111; font: inherit; letter-spacing: .26px; }
.notice u { text-underline-offset: 3px; text-decoration-thickness: 1px; }
.notice .x { margin-left: 18px; }

/* mail page */
.page { position: relative; height: 923px; overflow: hidden; background: #262626; }
.gmail { display: flex; height: 923px; color: #121212; font-family: Roboto, "DejaVu Sans", sans-serif; }
.gmail [dir=rtl] { font-family: "DejaVu Sans", sans-serif; }
.scrolltrack { width: 12px; padding: 298px 3px 0; background: #4f4f4f; }
.scrolltrack i { display: block; height: 40px; border-radius: 3px; background: #6e6e6e; }
.rail { display: flex; flex-direction: column; width: 43px; padding: 16px 0 0 5px; border-right: 1px solid #232323; font-family: "Liberation Sans", sans-serif; }
.rail svg { margin-bottom: 37px; }
.rail .disc { display: flex; flex: none; align-items: center; justify-content: center; width: 32px; height: 32px; margin: 0 0 35px 1px; border-radius: 50%; background: #120909; color: #222; font-size: 17px; }
.rail hr { width: 20px; margin-top: -3px; border: 0; border-top: 1px solid #1d1d1d; }
.rail .add { margin: 35px 0 0 1px; }
.rail .fold { margin: auto 0 17px; }
.mail { position: relative; display: flex; flex-direction: column; width: 1538px; }
.mailbar { position: absolute; left: 4px; top: 115px; width: 6px; height: 571px; border-radius: 3px; background: #101010; }
.mrow, .lft, .rgt { display: flex; align-items: center; }
.mrow { justify-content: space-between; padding: 0 73px 0 29px; }
.m-search { height: 65px; padding: 0 19px 0 17px; font-size: 15.500px; color: #151515; }
.m-search .lft { gap: 26px; padding-top: 2px; }
.m-search .rgt { gap: 16px; }
.m-tools { height: 47px; margin-left: 17px; padding: 0 16px 0 21px; border-bottom: 1px solid #222; }
.m-tools .lft b { margin: 0 19px 0 11px; font-size: 19px; font-weight: 700; font-family: "DejaVu Sans", sans-serif; line-height: 20px; }
.m-tools .lft svg + svg { margin-left: 19px; }
.m-tools .rgt { gap: 24px; }
.m-tools .rgt svg:last-child { margin-left: 10px; }
.m-subject { height: 69px; padding: 0 73px 1px 32px; }
.m-subject .lft { gap: 17px; }
.m-subject h1 { font: 400 22px "Open Sans", sans-serif; letter-spacing: -1.180px; color: #0a0a0a; }
.m-sender { height: 55px; align-items: flex-start; padding: 7px 17px 0 29px; color: #121212; }
.m-sender .lft { gap: 20px; height: 20px; }
.m-sender time { font-size: 12.500px; margin-right: -12px; }
.m-sender .lft time { font-family: Roboto, "DejaVu Sans", sans-serif; color: #151515; }
.m-sender p { display: flex; flex-direction: column; align-items: flex-end; gap: 3px; }
.m-sender p b { font-size: 14px; letter-spacing: .14px; line-height: 19px; color: #0a0a0a; }
.m-sender small { font-size: 12.500px; }
.m-sender small[dir=rtl] { font-family: Roboto, "DejaVu Sans", sans-serif; }
.m-sender .rgt { align-items: flex-start; }
.avatar { display: flex; align-items: center; justify-content: center; width: 40px; height: 40px; margin: -1px 0 0 16px; border: 1px solid #2b2b2b; border-radius: 50%; color: #1f1f1f; }
.m-trans { height: 35px; margin: 0 73px 0 29px; padding: 0; border: solid #232323; border-width: 1px 0; }
.m-trans .lft { margin-top: -5px; }
.m-trans .x { width: 10px; height: 10px; margin: 6px 6px 0 15px; }
.m-trans a { font-size: 12.600px; color: #0e1c2c; }
.m-trans .rgt { padding-right: 11px; gap: 11px; font-size: 13.500px; }
.m-body { height: 178px; padding: 46px 0 0 29px; font: 13px/19.400px "DejaVu Sans", sans-serif; color: #05052c; }
.m-body .dash { color: #101010; line-height: 20px; }
.m-atthead { height: 45px; margin: 0 73px 0 29px; padding: 0 0 2px; border-top: 1px dotted #1f1f1f; }
.m-atthead .lft { gap: 21px; }
.m-atthead b { font-size: 13.200px; color: #0a0a0a; }
.m-cards { display: flex; justify-content: space-between; padding: 0 73px 0 305px; }
.card { position: relative; width: 180px; height: 120px; border: 1px solid #202020; }
.card .thumb { height: 86px; border-bottom: 1px solid #202020; overflow: hidden; }
.card p { display: flex; align-items: center; justify-content: flex-end; height: 32px; padding-right: 8px; gap: 9px; font-size: 12px; font-weight: 700; color: #131313; }
.card p svg { color: #0b1c3b; }
.pdf > svg { position: absolute; left: 0; bottom: 0; }
.pdf .thumb { padding: 38px 0 0 50px; font: 7px "Liberation Sans", sans-serif; color: #080808; background: linear-gradient(97deg, #252728 0, #1e2429 42px, #10191f 48px, #1c2226 110px, #262626); }
.pdf .thumb i { display: block; width: 70px; height: 29px; margin: 11px 0 0 -12px; background: repeating-linear-gradient(0deg, #062433 0 4px, transparent 4px 5px, #33200a 5px 7px, transparent 7px 14px), repeating-linear-gradient(90deg, #33200a 0 2px, #2f2c15 2px 14px, #33200a 14px 16px); }
.pdf p { justify-content: flex-start; padding-left: 60px; font-size: 16px; font-weight: 400; }
.txt .thumb { display: flex; align-items: center; justify-content: center; padding-left: 12px; }
.m-reply { display: flex; align-items: center; justify-content: flex-end; align-self: flex-end; width: 140px; height: 36px; margin: 54px 69px 0 0; padding-right: 30px; gap: 10px; border: 1px solid #1b1b1b; border-radius: 4px; font-size: 13.500px; }

/* right-hand mail menu */
.side { display: flex; flex-direction: column; width: 255px; }
.brand { display: flex; align-items: center; justify-content: flex-end; height: 66px; padding: 6px 20px 0 0; gap: 15px; font-size: 22px; color: #0c0c0c; }
.side .compose { display: flex; align-items: center; justify-content: flex-end; align-self: flex-end; gap: 16px; width: 113px; height: 48px; margin: 14px 7px 16px 0; padding-right: 17px; border-radius: 24px; font-size: 14px; box-shadow: 0 1px 3px #151515; }
.item { display: flex; align-items: center; justify-content: flex-end; flex: none; height: 32px; margin-left: 15px; padding: 0 26px 0 12px; gap: 18px; }
.item svg { width: 20px; height: 20px; }
.item em { margin-right: auto; font-size: 13px; }
.item.inbox { border-radius: 16px 0 0 16px; background: #2b2221; color: #400e0b; font-weight: 700; }
.item.bold span { font-weight: 700; color: #090909; }
.meet, .hang { font: 500 14px Roboto, sans-serif; text-align: right; padding-right: 26px; border-top: 1px solid #222; color: #0c0c0c; }
.meet { height: 41px; line-height: 48px; letter-spacing: .770px; }
.hang { height: 38px; line-height: 47px; margin-top: 8px; letter-spacing: .400px; }
.user { display: flex; align-items: center; height: 41px; margin: 0 23px 0 15px; padding: 0 0 4px 7px; border-bottom: 1px solid #1d1d1d; font: 13px "DejaVu Sans", sans-serif; letter-spacing: -.15px; }
.user .caret { margin: 0 17px 0 74px; border-width: 4px; border-bottom: 0; color: #1a1a1a; }
.user .caret { border-color: #1a1a1a transparent transparent; margin-left: auto; }
.user span { margin-right: 0; }
.user .me { margin: 2px -1px 0 0; }
.empty { display: flex; flex-direction: column; align-items: center; padding: 99px 8px 0 0; color: #232323; font-size: 13px; }
.empty p { margin-top: 19px; line-height: 20px; color: #131313; }
.empty a { line-height: 20px; color: #0c1936; }
.chatbar { display: flex; align-items: center; height: 33px; margin-top: auto; padding: 1px 0 0 80px; border-top: 1px solid #1f1f1f; }
.chatbar b { display: flex; align-items: center; justify-content: center; width: 37px; height: 32px; margin: 0 9px 0 9px; background: #232323; color: #070707; }

/* attachment viewer */
.viewer { position: absolute; inset: 0; color: #fff; }
.slides { position: absolute; left: 424px; top: 0; width: 1000px; }
.prev-edge { display: block; height: 1px; margin-bottom: 16px; background: #777; }
.slide { position: relative; isolation: isolate; display: flow-root; width: 1000px; height: 750px; margin-bottom: 16px; background: #fff; color: #000; box-shadow: 0 0 10px 2px rgba(0,0,0,.45); font-family: "Liberation Sans", sans-serif; }
.slide .bg { position: absolute; left: 0; top: 0; z-index: -1; }
.shead { display: flex; align-items: center; justify-content: flex-end; height: 34px; padding-right: 18px; gap: 4px; }
.shead span { font: italic 700 22.200px/30px "Liberation Sans", sans-serif; padding-top: 1px; }
.slide h3 { margin-top: 62px; font-size: 33.450px; line-height: 40px; text-align: center; }
.table { width: 901px; margin: 61px 0 0 64px; border: solid #444c54; border-width: 1px 1px 0; }
.table > div { display: grid; grid-template-columns: 154px 1fr; height: 39px; border-bottom: 1px solid #444c54; }
.table > .th { height: 40px; }
.table > div > :first-child { border-right: 1px solid #444c54; }
.th b { display: flex; align-items: center; justify-content: center; padding: 1px 0 0 2px; font-style: italic; font-size: 24px; }
.th span { display: inline-block; transform: scaleX(.94); }
.table code { padding: 0 0 0 8px; font: 700 22px/38px "Liberation Mono", monospace; letter-spacing: .460px; color: #00f; }
.table p { padding-left: 6px; font-size: 20px; line-height: 34px; font-weight: 700; }
.table p span { display: inline-block; transform: scaleX(.945); transform-origin: 0 50%; }
.num { margin: 60px 0 0 903px; font: 20px/21px "Liberation Serif", serif; }
.slide footer { display: flex; gap: 194px; padding-left: 117px; font: italic 700 19.530px/22px "Liberation Serif", serif; }
.vhead { position: absolute; left: 0; right: 0; top: 0; height: 72px; display: flex; justify-content: space-between; padding: 16px 20px 0; background: linear-gradient(rgba(0,0,0,.66), rgba(0,0,0,.47) 17px, rgba(0,0,0,.18) 42px, transparent); }
.vleft, .vright { display: flex; align-items: center; height: 24px; gap: 24px; }
.vright { gap: 11px; }
.vright span { font: 14px Roboto, sans-serif; letter-spacing: .130px; }
.vright i { width: 18px; height: 18px; margin-right: 6px; border-radius: 2px; background: #ea4335; font: 700 7px/18px Roboto, sans-serif; text-align: center; }
.openwith { position: absolute; left: 810px; top: 12px; display: flex; align-items: center; width: 239px; height: 32px; padding: 0 5px 0 8px; border-radius: 2px; background: linear-gradient(rgba(0,0,0,.92), rgba(25,28,32,.9)); font: 13px Roboto, "DejaVu Sans", sans-serif; }
.openwith span { flex: 1; margin-left: 7px; padding: 6px 7px 4px 0; border-left: 1px solid #666; letter-spacing: .05px; }
.openwith svg { margin-top: 2px; }
.round { position: absolute; top: 442px; display: flex; align-items: center; justify-content: center; width: 40px; height: 40px; border-radius: 50%; background: #0b0b0b; }
.prev { left: 16px; }
.next { left: 1792px; }
.zoombar { position: absolute; left: 789px; top: 867px; display: flex; align-items: center; width: 270px; height: 44px; padding-left: 12px; gap: 20px; border-radius: 2px; background: rgba(0,0,0,.75); font: 13px Roboto, "DejaVu Sans", sans-serif; }
.zoombar i { width: 1px; height: 44px; margin-left: -8px; background: #5c5c5c; }
.zoombar span { padding-top: 3px; }
.zoombar .n1 { margin-left: -4px; }
.zoombar .n2 { margin-left: -3px; }
.zoombar .n4 { margin-left: 0; font-size: 12px; }

/* dock */
.dock { display: flex; flex-direction: column; width: 72px; padding-top: 2px; background: linear-gradient(#482228, #3e1c2b 22%, #33182d 45%, #2d162b 65%, #211520); }
.app { position: relative; display: flex; align-items: center; justify-content: center; flex: none; width: 64px; height: 64px; margin: 2px 4px; }
.app.current { border-radius: 4px; background: rgba(255,255,255,.2); }
.app em { position: absolute; right: 0; top: 0; display: flex; flex-direction: column; justify-content: center; gap: 3px; height: 64px; }
.app em i { width: 6px; height: 6px; border-radius: 50%; background: #e95420; }
.grid { display: grid; grid-template-columns: repeat(3, 6px); grid-auto-rows: 6px; gap: 6px; margin: auto 0 19px 21px; }
.grid i { border-radius: 1.500px; background: #f2f0ee; }
```
